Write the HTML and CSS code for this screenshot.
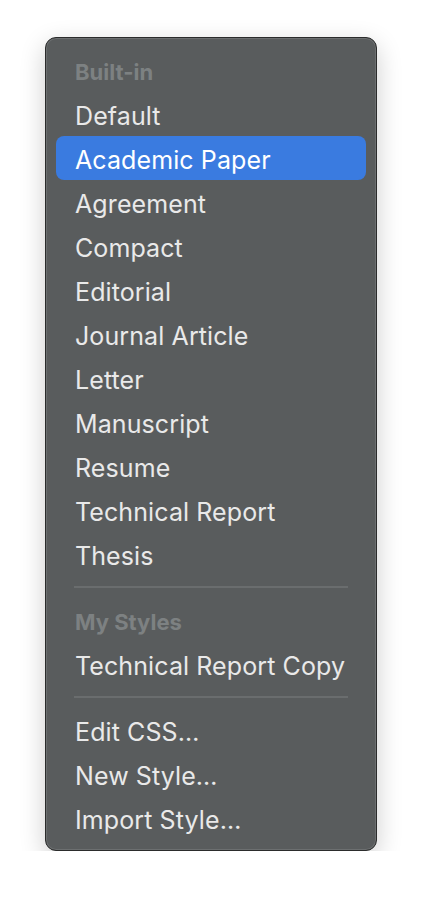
FILE: index.html
```html
<!DOCTYPE html>
<html lang="en">
<head>
    <meta charset="UTF-8">
    <meta name="viewport" content="width=device-width, initial-scale=1.0">
    <title>Styles Menu</title>
    <link rel="stylesheet" href="styles.css">
</head>
<body>
    <div class="menu" role="menu">
        <div class="menu-header">Built-in</div>
        <div class="menu-item">Default</div>
        <div class="menu-item selected">Academic Paper</div>
        <div class="menu-item">Agreement</div>
        <div class="menu-item">Compact</div>
        <div class="menu-item">Editorial</div>
        <div class="menu-item">Journal Article</div>
        <div class="menu-item">Letter</div>
        <div class="menu-item">Manuscript</div>
        <div class="menu-item">Resume</div>
        <div class="menu-item">Technical Report</div>
        <div class="menu-item">Thesis</div>

        <div class="separator"></div>

        <div class="menu-header">My Styles</div>
        <div class="menu-item">Technical Report Copy</div>

        <div class="separator"></div>

        <div class="menu-item">Edit CSS…</div>
        <div class="menu-item">New Style…</div>
        <div class="menu-item">Import Style…</div>
    </div>
</body>
</html>
```

FILE: styles.css
```css
body {
    margin: 0;
    background: #ffffff;
    font-family: Inter, "Noto Sans", sans-serif;
    -webkit-font-smoothing: antialiased;
}
.menu {
    width: 330px;
    margin: 37px 0 0 45px;
    padding: 10px 0;
    background: #595c5d;
    border: 1px solid #2b2c2c;
    border-radius: 11px;
    box-shadow: inset 0 0 0 1px #6c6f70, 0 8px 26px rgba(0,0,0,0.2);
}
.menu-header,
.menu-item {
    box-sizing: border-box;
    height: 44px;
    margin: 0 10px;
    padding: 4px 19px 0;
    display: flex;
    align-items: center;
    border-radius: 8px;
}
.menu-header {
    color: #7d8182;
    font-size: 22px;
    font-weight: 700;
}
.menu-item {
    color: #e9e9e9;
    font-size: 25px;
    letter-spacing: 0.1px;
}
.menu-item.selected {
    background: #3a7be0;
    color: #ffffff;
}
.separator {
    height: 2px;
    margin: 10px 28px;
    background: #6a6d6e;
}
```
